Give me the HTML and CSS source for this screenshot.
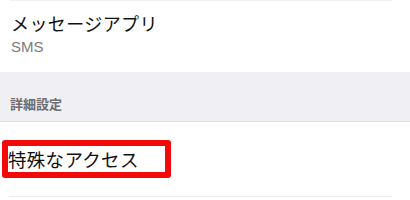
FILE: index.html
```html
<!DOCTYPE html>
<html lang="ja">
<head>
	<meta charset="UTF-8">
	<title>設定</title>
	<link rel="stylesheet" href="styles.css">
</head>
<body>
	<div class="settings">
		<div class="row row-app">
			<div class="row-title">メッセージアプリ</div>
			<div class="row-sub">SMS</div>
		</div>
		<div class="group-head">
			<span>詳細設定</span>
		</div>
		<div class="row row-access">
			<div class="row-title">特殊なアクセス</div>
			<i class="mark"></i>
		</div>
	</div>
</body>
</html>
```
FILE: styles.css
```css
body,div,span{
    margin: 0;
    padding: 0;
}
body{
    width: 410px;
    height: 200px;
    overflow: hidden;
    background: #fff;
    font-family: "Liberation Sans", "Noto Sans CJK JP", sans-serif;
}
i{
    font-style: normal;
}
.settings{
    display: flex;
    flex-direction: column;
}
.row{
    position: relative;
    display: flex;
    flex-direction: column;
    margin-right: 18px;
}
.row-app{
    height: 72px;
    box-sizing: border-box;
    padding-top: 11px;
    border-top: 1px solid #f2f2f2;
    margin-left: 10px;
}
.row-app .row-title{
    font-size: 18px;
    line-height: 26px;
    color: #111;
    letter-spacing: 0.4px;
    margin-left: 1px;
}
.row-app .row-sub{
    font-size: 15px;
    line-height: 18px;
    color: #7b7b7b;
    margin-left: 1px;
}
.group-head{
    height: 49px;
    background: #efeff4;
    border-bottom: 1px solid #e2e2e6;
    display: flex;
    align-items: flex-end;
    padding-left: 10px;
}
.group-head span{
    font-size: 13px;
    line-height: 14px;
    color: #6d6d72;
    padding-bottom: 9px;
    font-weight: bold;
}
.row-access{
    height: 75px;
    box-sizing: border-box;
    margin-left: 9px;
    padding-top: 26px;
    border-bottom: 1px solid #ececec;
}
.row-access .row-title{
    font-size: 18.5px;
    line-height: 26px;
    color: #111;
    margin-left: -1px;
    letter-spacing: 0.3px;
}
.mark{
    position: absolute;
    left: -7px;
    top: 18px;
    width: 157px;
    height: 26px;
    border: 6px solid #f20a0a;
    border-radius: 3px;
}
```
